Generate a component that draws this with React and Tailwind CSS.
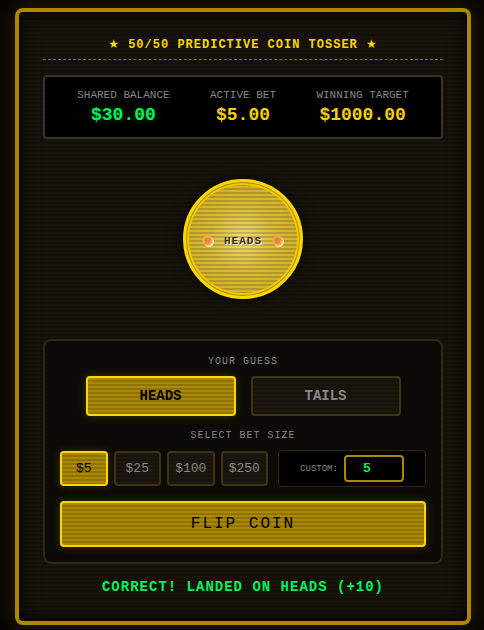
import { useState } from "react";

const stats = [
  { label: "SHARED BALANCE", value: "$30.00", color: "text-[#00f060] [text-shadow:0_0_8px_rgba(0,255,102,0.3)]" },
  { label: "ACTIVE BET", value: "$5.00", color: "text-[#f5cf00]" },
  { label: "WINNING TARGET", value: "$1000.00", color: "text-[#f5cf00]" },
];

const bets = [5, 25, 100, 250];

const stripes =
  "bg-[repeating-linear-gradient(180deg,transparent_0px,transparent_2px,rgba(0,0,0,0.16)_2px,rgba(0,0,0,0.16)_4px)]";

const active =
  "bg-[#aa8800] border-[#ffd700] text-black shadow-[0_0_10px_rgba(255,215,0,0.2)]";
const idle = "bg-[#1b170d] border-[#3f3215] text-[#888888]";

function Medal() {
  return (
    <svg width="12" height="12" viewBox="0 0 12 12" aria-hidden="true">
      <circle cx="6.8" cy="6.8" r="5.1" fill="#fff4dc" />
      <circle cx="5.6" cy="5.6" r="5.2" fill="#f5ad55" />
      <circle cx="5.6" cy="5.6" r="3.5" fill="#ee9038" />
      <path d="M3.4 4.2h4.4M4.6 4.2v2.4h2V4.2" stroke="#dc7f2c" strokeWidth="0.8" fill="none" />
    </svg>
  );
}

function Star() {
  return <span className="font-['DejaVu_Sans',sans-serif]">★</span>;
}

export default function App() {
  const [guess, setGuess] = useState("HEADS");
  const [bet, setBet] = useState(5);

  return (
    <div className="min-h-screen bg-[#080601] pt-2 pr-[13px] pb-[5px] pl-[15px] font-['Liberation_Mono','Courier_New',monospace]">
      <main className={`rounded-lg border-4 border-[#aa8800] bg-[#17130b] p-6 pb-[26px] shadow-[0_0_20px_rgba(170,136,0,0.2),inset_0_0_20px_rgba(0,0,0,0.8)] ${stripes}`}>

        {/* Title */}

        <h1 className="border-b border-dashed border-[#aa8800]/80 pb-1.5 text-center text-[12px] leading-4 font-bold tracking-[1px] text-[#ffd700]">
          <Star /> 50/50 PREDICTIVE COIN TOSSER <Star />
        </h1>

        {/* Stats */}

        <dl className="mt-[15px] flex justify-around rounded border-2 border-[#333333] bg-black px-3 py-2.5 text-center">
          {stats.map((s) => (
            <div key={s.label}>
              <dt className="text-[11px] leading-4 text-[#888888]">{s.label}</dt>
              <dd className={`text-[18px] leading-6 font-bold ${s.color}`}>{s.value}</dd>
            </div>
          ))}
        </dl>

        {/* Coin */}

        <div className="flex justify-center py-10">
          <div className="flex size-[120px] items-center justify-center gap-2.5 rounded-full border-[3px] border-[#ffd700] bg-[repeating-linear-gradient(180deg,transparent_0px,transparent_2px,rgba(0,0,0,0.16)_2px,rgba(0,0,0,0.16)_4px),radial-gradient(circle,#f3db78_0%,#dcb93a_40%,#cba91b_100%)] pt-1 text-[11px] leading-4 font-bold tracking-[1px] text-[#3a2c00] shadow-[0_0_15px_rgba(0,0,0,0.6),inset_0_0_0_1px_#a8880a,inset_0_0_0_3px_#f0ca00]">
            <Medal />
            <span className="[text-shadow:1px_1px_0_#fff]">HEADS</span>
            <Medal />
          </div>
        </div>

        {/* Controls */}

        <section className="rounded-lg border-2 border-[#2f2613] bg-[#0b0a06] p-[15px]">
          <h2 className="text-center text-[10px] leading-3 tracking-[1px] text-[#888888]">YOUR GUESS</h2>
          <div className="mt-2 flex justify-center gap-[15px]">
            {["HEADS", "TAILS"].map((side) => (
              <button
                key={side}
                onClick={() => setGuess(side)}
                className={`h-10 w-[150px] rounded border-2 text-[14px] leading-5 font-bold ${stripes} ${guess === side ? active : idle}`}
              >
                {side}
              </button>
            ))}
          </div>

          <h2 className="mt-3.5 text-center text-[10px] leading-3 tracking-[1px] text-[#888888]">SELECT BET SIZE</h2>
          <div className="mt-2 flex items-center gap-2.5">
            <div className="grid flex-1 grid-cols-4 gap-1.5">
              {bets.map((b) => (
                <button
                  key={b}
                  onClick={() => setBet(b)}
                  className={`h-[35px] rounded border-2 text-[13px] leading-4 ${stripes} ${bet === b ? active : idle}`}
                >
                  ${b}
                </button>
              ))}
            </div>
            <label className="flex w-[148px] items-center justify-center gap-1.5 rounded border border-[#2f2613] bg-black py-1 text-[9px] leading-4 text-[#888888]">
              CUSTOM:
              <input
                type="text"
                value={bet}
                onChange={(e) => setBet(Number(e.target.value) || 0)}
                className="h-[27px] w-[60px] rounded border-2 border-[#aa8800] bg-black pr-3.5 text-center text-[13px] font-bold text-[#00f060] outline-none"
              />
            </label>
          </div>

          <button className={`mt-3.5 h-[46px] w-full rounded border-2 text-[16px] leading-5 tracking-[2px] ${stripes} ${active}`}>
            FLIP COIN
          </button>
        </section>

        <p className="mt-[15px] text-center text-[14px] leading-4 font-bold tracking-[1px] text-[#00f060]">
          CORRECT! LANDED ON HEADS (+10)
        </p>
      </main>
    </div>
  );
}
